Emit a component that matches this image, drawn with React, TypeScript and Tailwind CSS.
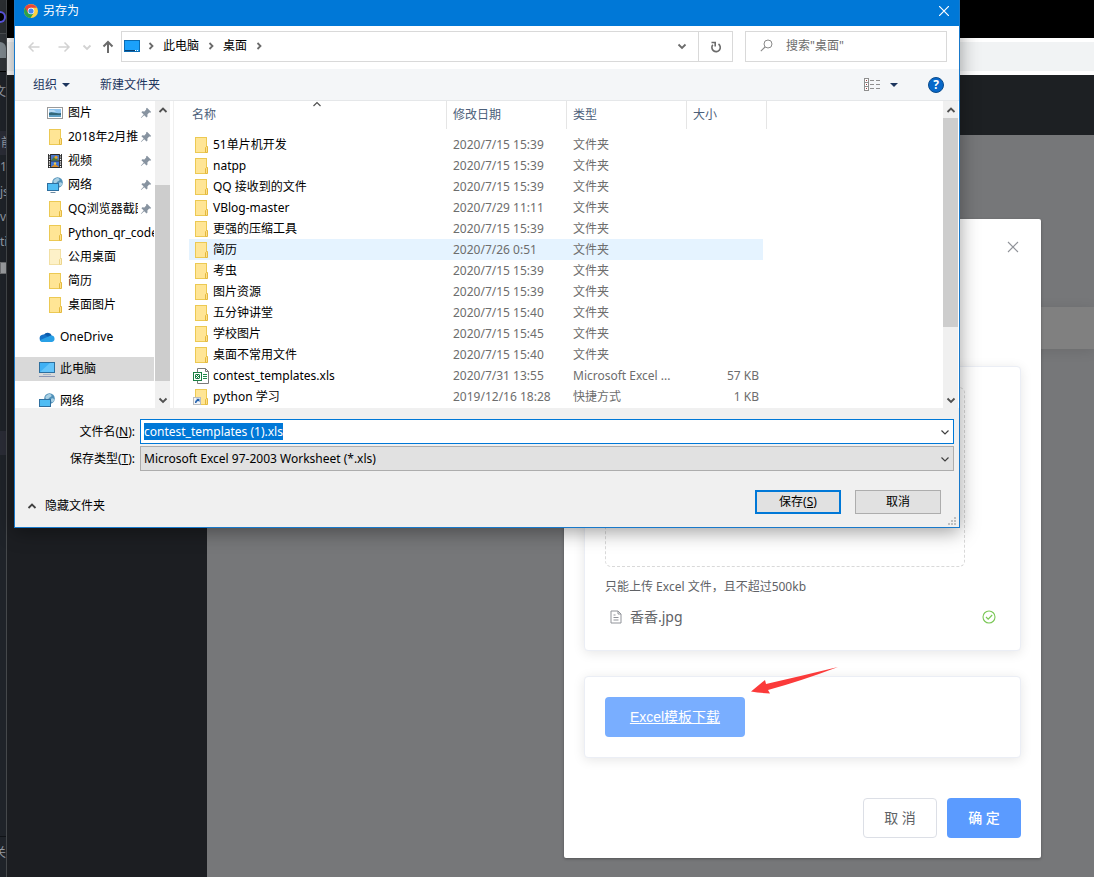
import { useEffect, useRef, type ReactNode } from "react";

type IconProps = { className?: string };

function ChromeIcon() {
  return (
    <svg viewBox="0 0 28 28" className="h-3.5 w-3.5 shrink-0" aria-hidden="true">
      <circle cx="14" cy="14" r="14" fill="#fdd043" />
      <path d="M14 14 1.900 7A14 14 0 0 0 13 28l7-11z" fill="#2ba24c" />
      <path d="M8 17.500 1.900 7A14 14 0 0 1 26.100 7.500H14z" fill="#e8453a" />
      <circle cx="14" cy="14" r="6.600" fill="#fff" />
      <circle cx="14" cy="14" r="5.200" fill="#4285f4" />
    </svg>
  );
}

function Folder({ pale = false, shortcut = false }: { pale?: boolean; shortcut?: boolean }) {
  return (
    <svg viewBox="0 0 16 16" className="h-4 w-4 shrink-0" aria-hidden="true">
      <rect x="2.500" y="0.500" width="11" height="15" fill={pale ? "#fdf1c8" : "#ffe595"} stroke={pale ? "#f2e0a4" : "#ecc953"} />
      <path d="M12.500 15.500v-5l1-1h1v6z" fill={pale ? "#fdf1c8" : "#ffe08a"} stroke={pale ? "#ecd58c" : "#e3b93f"} />
      {shortcut && (
        <>
          <rect x="0.500" y="8.500" width="7" height="7" fill="#f4f6f8" stroke="#b9bcc0" />
          <path d="M2 14c0-2 .600-3 2-3L3.200 9.800H6.500V13L5.400 12C4.200 12 3.600 12.700 3.400 14z" fill="#1f5fae" />
        </>
      )}
    </svg>
  );
}

function ExcelIcon() {
  return (
    <svg viewBox="0 0 16 16" className="h-4 w-4 shrink-0" aria-hidden="true">
      <path d="M4.500.500h8l3 3v12h-11z" fill="#fff" stroke="#7a7a7a" />
      <path d="M12.500.500v3h3" fill="none" stroke="#7a7a7a" />
      <path d="M10 6.500h4M10 8.500h4M10 10.500h4" stroke="#1f8a4c" />
      <rect x="0.500" y="4.500" width="8" height="8" fill="#fff" stroke="#1a7f43" />
      <path d="M2 6h5v5H2z" fill="#1a7f43" />
      <path d="m2.500 6.500 4 4M6.500 6.500l-4 4" stroke="#fff" />
    </svg>
  );
}

function PictureIcon() {
  return (
    <svg viewBox="0 0 16 16" className="h-4 w-4 shrink-0" aria-hidden="true">
      <rect x="0.500" y="2.500" width="15" height="11" fill="#fff" stroke="#9a9a9a" />
      <rect x="2" y="4" width="12" height="8" fill="#8fc4ee" />
      <path d="M2 8c3-2 6 1 12 0v2H2z" fill="#34687a" />
      <rect x="2" y="10" width="12" height="2" fill="#5f9fc4" />
      <path d="M2 5.500h5l2 1H2z" fill="#e8f4fc" />
    </svg>
  );
}

function VideoIcon() {
  return (
    <svg viewBox="0 0 16 16" className="h-4 w-4 shrink-0" aria-hidden="true">
      <rect x="1" y="1" width="14" height="14" fill="#2b2b2b" />
      <path d="M2.500 1v14M13.500 1v14" stroke="#fff" strokeWidth="1.200" strokeDasharray="1.200 1.200" />
      <rect x="4" y="2" width="8" height="5.500" fill="#4c78c9" />
      <rect x="4" y="8.500" width="8" height="5.500" fill="#3f75d6" />
      <path d="M4 7.500 7 4l5 3.500z" fill="#4d7a35" />
      <circle cx="9" cy="4.200" r="1.500" fill="#e5a52b" />
      <path d="m4 14 4-3 4 3z" fill="#d98f2b" />
      <circle cx="8" cy="10.500" r="1.200" fill="#edc94d" />
    </svg>
  );
}

function NetworkIcon() {
  return (
    <svg viewBox="0 0 16 16" className="h-4 w-4 shrink-0" aria-hidden="true">
      <circle cx="10.500" cy="5.500" r="5.300" fill="#4f90b8" />
      <path d="M8 2c2-1.500 4-1 4.500.500S10 4 9.500 6 7 6.500 6.500 5 7 3 8 2zM12.500 5.500c1.500-.500 3 .500 2.500 2s-2 2.500-2.500 1.500-1-2.500 0-3.500z" fill="#a9d0e4" />
      <rect x="0.500" y="6.500" width="11" height="7" fill="#50bdf4" stroke="#2f6f9f" />
      <path d="M3.500 15.500h5" stroke="#6e8ca3" />
    </svg>
  );
}

function CloudIcon() {
  return (
    <svg viewBox="0 0 16 16" className="h-4 w-4 shrink-0" aria-hidden="true">
      <path d="M4.800 6A4.500 4.500 0 0 1 12.800 6.500L9.500 9z" fill="#0a5bab" />
      <path d="M4 13a3.700 3.700 0 0 1-.500-7.300C5 5.300 6.500 5.800 8 7l4 3z" fill="#1372c8" />
      <path d="M12.500 6.500a3.300 3.300 0 0 1 .500 6.500H4c-1.500 0-2.700-.700-3.300-1.800L9.500 7.500c1-.700 2-1 3-1z" fill="#28a0e6" />
    </svg>
  );
}

function MonitorIcon() {
  return (
    <svg viewBox="0 0 16 16" className="h-4 w-4 shrink-0" aria-hidden="true">
      <rect x="0.500" y="1.500" width="15" height="10" fill="#3fb1f5" stroke="#2d6f9e" />
      <path d="M1 11 11 2h4v9z" fill="#63c4fa" />
      <path d="M4 13.500h8" stroke="#a7b6c6" />
      <path d="M0 15.500h16" stroke="#8c97b5" />
    </svg>
  );
}

function DesktopIcon() {
  return (
    <svg viewBox="0 0 16 12" className="h-3 w-4 shrink-0" aria-hidden="true">
      <rect x="0.500" y="0.500" width="15" height="11" fill="#1ba1fb" stroke="#0a6cb4" />
      <path d="M1 10.500h10" stroke="#083f70" />
      <path d="M11 10.500h4" stroke="#fff" strokeDasharray="1 1" />
    </svg>
  );
}

function Pin() {
  return (
    <svg viewBox="0 0 12 12" className="h-3 w-3 shrink-0" aria-hidden="true">
      <path d="M7 .800 11.200 5l-1 .800-1-.200-1.800 1.900.100 2.100-.900.900-2.400-2.300L1.200 11l-.400-.300 2.900-3.200-2.300-2.300.900-.900 2.100.100L6.200 2.600 6.100 1.600z" fill="#8793a0" />
    </svg>
  );
}

function Chevron({ dir, thin = false, className = "" }: { dir: "up" | "down" | "right"; thin?: boolean; className?: string }) {
  const d = dir === "up" ? "M1.500 7 5 3.500 8.500 7" : dir === "down" ? "M1.500 3.500 5 7l3.500-3.500" : "M3.500 2 6.500 5l-3 3";
  return (
    <svg viewBox="0 0 10 10" className={`h-2.5 w-2.5 shrink-0 ${className}`} aria-hidden="true">
      <path d={d} fill="none" stroke="currentColor" strokeWidth={thin ? 1.200 : 1.800} />
    </svg>
  );
}

function Triangle({ className = "" }: IconProps) {
  return (
    <svg viewBox="0 0 8 4" className={`h-1 w-2 shrink-0 ${className}`} aria-hidden="true">
      <path d="M0 0h8L4 4z" fill="#1c355e" />
    </svg>
  );
}

function Arrow({ dir, className }: { dir: "left" | "right" | "up"; className: string }) {
  const d =
    dir === "left" ? "M12.500 7H2M6.500 2.500 2 7l4.500 4.500" : dir === "right" ? "M1.500 7H12M7.500 2.500 12 7l-4.500 4.500" : "M7 13V2M2.500 6.500 7 2l4.500 4.500";
  return (
    <svg viewBox="0 0 14 14" className={`h-3.5 w-3.5 ${className}`} aria-hidden="true">
      <path d={d} fill="none" stroke="currentColor" strokeWidth={dir === "up" ? 2 : 1.500} />
    </svg>
  );
}

type Place = { name: string; icon: ReactNode; pinned?: boolean };

const quickAccess: Place[] = [
  { name: "图片", icon: <PictureIcon />, pinned: true },
  { name: "2018年2月推", icon: <Folder />, pinned: true },
  { name: "视频", icon: <VideoIcon />, pinned: true },
  { name: "网络", icon: <NetworkIcon />, pinned: true },
  { name: "QQ浏览器截图", icon: <Folder />, pinned: true },
  { name: "Python_qr_code", icon: <Folder /> },
  { name: "公用桌面", icon: <Folder pale /> },
  { name: "简历", icon: <Folder /> },
  { name: "桌面图片", icon: <Folder /> },
];

const roots: (Place & { active?: boolean })[] = [
  { name: "OneDrive", icon: <CloudIcon /> },
  { name: "此电脑", icon: <MonitorIcon />, active: true },
  { name: "网络", icon: <NetworkIcon /> },
];

type FileRow = { name: string; date: string; type: string; size?: string; icon?: ReactNode; hover?: boolean };

const files: FileRow[] = [
  { name: "51单片机开发", date: "2020/7/15 15:39", type: "文件夹" },
  { name: "natpp", date: "2020/7/15 15:39", type: "文件夹" },
  { name: "QQ 接收到的文件", date: "2020/7/15 15:39", type: "文件夹" },
  { name: "VBlog-master", date: "2020/7/29 11:11", type: "文件夹" },
  { name: "更强的压缩工具", date: "2020/7/15 15:39", type: "文件夹" },
  { name: "简历", date: "2020/7/26 0:51", type: "文件夹", hover: true },
  { name: "考虫", date: "2020/7/15 15:39", type: "文件夹" },
  { name: "图片资源", date: "2020/7/15 15:39", type: "文件夹" },
  { name: "五分钟讲堂", date: "2020/7/15 15:40", type: "文件夹" },
  { name: "学校图片", date: "2020/7/15 15:45", type: "文件夹" },
  { name: "桌面不常用文件", date: "2020/7/15 15:40", type: "文件夹" },
  { name: "contest_templates.xls", date: "2020/7/31 13:55", type: "Microsoft Excel ...", size: "57 KB", icon: <ExcelIcon /> },
  { name: "python 学习", date: "2019/12/16 18:28", type: "快捷方式", size: "1 KB", icon: <Folder shortcut /> },
];

function EditorStrip() {
  return (
    <div className="flex w-[7px] shrink-0 flex-col overflow-hidden border-r border-[#45484b] bg-[#1f2329] text-xs leading-6 whitespace-nowrap text-[#9299a3]">
      <div className="flex h-[33px] items-center justify-start bg-[#2b2e31]">
        <span className="h-3 w-1.5 shrink-0 rounded-r-full border-2 border-l-0 border-[#5a55e0] bg-black" />
      </div>
      <div className="h-[38px] border-t border-[#4a4d50] bg-[#303438] pt-2">
        <div className="h-4 w-1.5 rounded-tr-md bg-[#7d868c]" />
      </div>
      <div className="h-9 border-t border-black pt-2">
        <div className="flex w-1.5 justify-end">文</div>
      </div>
      <div className="mt-6 h-6 bg-[#2a2c36] pl-px">前</div>
      <div className="h-[25px]">1</div>
      <div className="h-[25px]">js</div>
      <div className="h-[25px]">v</div>
      <div className="h-6">ti</div>
      <div className="mt-2 h-3 border border-r-0 border-[#6d6f72] bg-[#9b9da0]" />
      <div className="mt-[157px] h-6 bg-[#2a2c36]" />
      <div className="mt-auto mb-3 border-t border-[#101317] pt-1">
        <div className="flex w-1.5 justify-end">关</div>
      </div>
    </div>
  );
}

function BrowserPage() {
  return (
    <div className="flex min-w-0 flex-1 flex-col">
      <div className="h-[38px] bg-black" />
      <div className="h-[37px] border-y-4 border-white bg-[#f1f3f4]" />
      <div className="h-[60px] bg-[#1d2023]" />
      <div className="flex flex-1">
        <div className="w-[200px] shrink-0 bg-[#1c1e22]" />
        <div className="flex-1 bg-[#767779] pt-[172px]">
          <div className="h-[42px] bg-[#808080] shadow-[0_2px_12px_rgba(0,0,0,0.1)]" />
        </div>
      </div>
    </div>
  );
}

const cardClass = "rounded-[4px] border border-[#ebeef5] bg-white p-5 shadow-[0_2px_12px_rgba(0,0,0,0.1)]";

function UploadModal() {
  return (
    <section aria-label="上传" className="w-[477px] rounded-[2px] bg-white p-5 text-sm text-[#606266] shadow-[0_1px_3px_rgba(0,0,0,0.3)]">
      <div className="flex h-[127px] items-start justify-end">
        <button type="button" aria-label="关闭" className="p-0.5 text-[#909399]">
          <svg viewBox="0 0 12 12" className="h-3 w-3" aria-hidden="true">
            <path d="m1 1 10 10M11 1 1 11" stroke="currentColor" strokeWidth="1.100" />
          </svg>
        </button>
      </div>
      <div className={`${cardClass} h-[285px]`}>
        <div className="h-[180px] max-w-[360px] rounded-[6px] border border-dashed border-[#d9d9d9]" />
        <p className="mt-3 text-xs leading-4">只能上传 Excel 文件，且不超过500kb</p>
        <div className="mt-2 flex h-7 items-center px-1">
          <svg viewBox="0 0 14 14" className="h-3.5 w-3.5 text-[#909399]" aria-hidden="true">
            <path d="M2 1h7l3 3v9H2zM9 1v3h3M4.500 5h2M4.500 7.500h5M4.500 10h5" fill="none" stroke="currentColor" />
          </svg>
          <span className="ml-[7px] flex-1">香香.jpg</span>
          <svg viewBox="0 0 14 14" className="h-3.5 w-3.5 text-[#7ac756]" aria-hidden="true">
            <circle cx="7" cy="7" r="6" fill="none" stroke="currentColor" strokeWidth="1.100" />
            <path d="m4 7 2.200 2.200L10.200 5" fill="none" stroke="currentColor" strokeWidth="1.200" />
          </svg>
        </div>
      </div>
      <div className={`${cardClass} relative mt-[25px]`}>
        <a href="#template" className="inline-flex h-10 w-[140px] items-center justify-center rounded-[4px] bg-[#79aeff] font-['Liberation_Sans','Noto_Sans_CJK_SC',sans-serif] text-white underline">
          Excel模板下载
        </a>
        <svg viewBox="0 0 88 28" className="absolute -top-2.5 left-[166px] h-7 w-[88px]" aria-hidden="true">
          <path d="M0 24.500 14 13l1 4Q50 9 87 0 50 14 17 23l2 3.500Q9 26 0 24.500z" fill="#fb3a3a" />
        </svg>
      </div>
      <div className="mt-10 flex justify-end gap-2.5">
        <button type="button" className="h-10 w-[74px] rounded-[4px] border border-[#dcdfe6] bg-white">取 消</button>
        <button type="button" className="h-10 w-[74px] rounded-[4px] bg-[#5b9bff] font-medium text-white">确 定</button>
      </div>
    </section>
  );
}

function ScrollBar({ thumb }: { thumb: ReactNode }) {
  return (
    <div className="flex w-[15px] shrink-0 flex-col items-center bg-[#f0f0f0] text-[#505050]">
      <div className="flex h-[17px] items-center"><Chevron dir="up" /></div>
      <div className="flex min-h-0 w-full flex-1 flex-col">{thumb}</div>
      <div className="flex h-[17px] items-center"><Chevron dir="down" /></div>
    </div>
  );
}

function NavRow() {
  return (
    <div className="flex h-[43px] items-center bg-white px-3 pb-0.5">
      <button type="button" aria-label="后退"><Arrow dir="left" className="text-[#d2d2d2]" /></button>
      <button type="button" aria-label="前进" className="ml-4"><Arrow dir="right" className="text-[#d2d2d2]" /></button>
      <button type="button" aria-label="最近位置" className="ml-[11px]"><Chevron dir="down" className="text-[#d2d2d2]" /></button>
      <button type="button" aria-label="上移" className="ml-[9px]"><Arrow dir="up" className="text-[#6b6b6b]" /></button>
      <div className="ml-1.5 flex h-[31px] min-w-0 flex-1 border border-[#d9d9d9]">
        <div className="flex min-w-0 flex-1 items-center gap-2 pb-0.5 pl-0.5">
          <DesktopIcon />
          <div className="flex items-center gap-[9px]">
            <Chevron dir="right" className="-mx-0.5 text-[#6b6b6b]" />
            <span>此电脑</span>
            <Chevron dir="right" className="-mx-0.5 text-[#6b6b6b]" />
            <span>桌面</span>
            <Chevron dir="right" className="-mx-0.5 text-[#6b6b6b]" />
          </div>
          <button type="button" aria-label="以前的位置" className="mr-[11px] ml-auto flex"><Chevron dir="down" className="text-[#6b6b6b]" /></button>
        </div>
        <button type="button" aria-label="刷新" className="flex w-[34px] items-center justify-center border-l border-[#d9d9d9]">
          <svg viewBox="0 0 12 12" className="h-3 w-3" aria-hidden="true">
            <path d="M8.500 3A4.200 4.200 0 1 1 2.800 3.800M1.500 1.500H5.200V5.500" fill="none" stroke="#6b6b6b" strokeWidth="1.600" />
          </svg>
        </button>
      </div>
      <label className="ml-3 flex h-[31px] w-[202px] items-center border border-[#d9d9d9] pb-0.5 pl-3.5">
        <svg viewBox="0 0 13 13" className="h-[13px] w-[13px] shrink-0" aria-hidden="true">
          <circle cx="8" cy="5" r="4" fill="none" stroke="#8a8a8a" />
          <path d="M5 8 .800 12.200" stroke="#8a8a8a" strokeWidth="1.100" />
        </svg>
        <input aria-label="搜索" placeholder={'搜索"桌面"'} className="ml-[13px] w-full min-w-0 outline-none placeholder:text-[#6d6d6d] placeholder:opacity-100" />
      </label>
    </div>
  );
}

function ToolRow() {
  return (
    <div className="flex h-8 items-center border-b border-[#e5e7e9] bg-[#f4f6f8] pr-[15px] pl-[18px] text-[#1c355e]">
      <button type="button" className="flex items-center gap-[5px]">组织 <Triangle /></button>
      <button type="button" className="ml-[30px]">新建文件夹</button>
      <button type="button" aria-label="更改视图" className="ml-auto flex items-center gap-2.5">
        <svg viewBox="0 0 16 13" className="h-[13px] w-4" aria-hidden="true">
          <rect x="0.500" y="0.500" width="4" height="12" fill="#fff" stroke="#8f8f8f" />
          <path d="M0 4.500h5M0 8.500h5" stroke="#8f8f8f" />
          <path d="M6 2.500h4M12 2.500h4M6 6.500h4M12 6.500h4M6 10.500h4M12 10.500h4" stroke="#8f8f8f" />
          <path d="M2 2.500h1M2 6.500h1M2 10.500h1" stroke="#a13c3c" />
        </svg>
        <Triangle />
      </button>
      <button type="button" aria-label="帮助" className="ml-[30px] flex h-4 w-4 items-center justify-center rounded-full border border-[#0b4c8c] bg-[#0868c9] text-xs leading-3 font-bold text-white">
        ?
      </button>
    </div>
  );
}

function SideTree() {
  return (
    <nav aria-label="位置" className="mr-px w-[139px] shrink-0 overflow-hidden whitespace-nowrap">
      <ul>
        {quickAccess.map((p) => (
          <li key={p.name}>
            <a href="#place" className="flex h-6 items-center pl-8">
              {p.icon}
              <span className="ml-[5px] min-w-0 flex-1 overflow-hidden">{p.name}</span>
              {p.pinned && <span className="mr-0.5 ml-0.5"><Pin /></span>}
            </a>
          </li>
        ))}
        {roots.map((p) => (
          <li key={p.name} className="mt-2">
            <a href="#place" className={`flex h-6 items-center pl-6 ${p.active ? "bg-[#d9d9d9]" : ""}`}>
              {p.icon}
              <span className="ml-[5px]">{p.name}</span>
            </a>
          </li>
        ))}
      </ul>
    </nav>
  );
}

function FileTable() {
  return (
    <div className="relative min-w-0 flex-1 overflow-hidden pl-[15px]">
      <table className="w-[578px] table-fixed border-separate border-spacing-0 text-left whitespace-nowrap">
        <colgroup>
          <col className="w-[258px]" />
          <col className="w-[120px]" />
          <col className="w-[120px]" />
          <col className="w-[76px]" />
          <col className="w-1" />
        </colgroup>
        <thead>
          <tr className="h-7 text-[#4c607a]">
            <th className="relative border-r border-[#e5e5e5] p-0 pl-[3px] font-normal">
              名称
              <Chevron dir="up" thin className="absolute -top-0.5 left-[123px] text-[#505050]" />
            </th>
            <th className="border-r border-[#e5e5e5] p-0 pl-1.5 font-normal">修改日期</th>
            <th className="border-r border-[#e5e5e5] p-0 pl-1.5 font-normal">类型</th>
            <th colSpan={2} className="border-r border-[#e5e5e5] p-0 pl-1.5 font-normal">大小</th>
          </tr>
        </thead>
        <tbody>
          <tr aria-hidden="true" className="h-[5px]"><td className="p-0" /></tr>
          {files.map((f) => {
            const cell = f.hover ? "bg-[#e5f3ff] p-0" : "p-0";
            return (
              <tr key={f.name} className="h-[21px] text-[#6d6d6d]">
                <td className={cell}>
                  <div className="flex items-center gap-1 pl-1 text-black">
                    {f.icon ?? <Folder />}
                    <span>{f.name}</span>
                  </div>
                </td>
                <td className={`${cell} pl-1.5`}>{f.date}</td>
                <td className={`${cell} pl-1.5`}>{f.type}</td>
                <td className={`${cell} pr-1 text-right`}>{f.size}</td>
              </tr>
            );
          })}
        </tbody>
      </table>
    </div>
  );
}

function SaveDialog() {
  const nameRef = useRef<HTMLInputElement>(null);
  useEffect(() => {
    nameRef.current?.focus();
    nameRef.current?.select();
  }, []);

  return (
    <section aria-label="另存为" className="w-full border border-t-0 border-[#1979ca] bg-[#f0f0f0] text-xs leading-4 text-black shadow-[0_4px_18px_rgba(0,0,0,0.38)]">
      <header className="flex h-[26px] items-center bg-[#0078d7] pr-2.5 pb-[5px] pl-[9px] text-white">
        <ChromeIcon />
        <h1 className="ml-[5px]">另存为</h1>
        <button type="button" aria-label="关闭" className="ml-auto">
          <svg viewBox="0 0 10 10" className="h-2.5 w-2.5" aria-hidden="true">
            <path d="m0 0 10 10M10 0 0 10" stroke="#fff" strokeWidth="1.200" />
          </svg>
        </button>
      </header>
      <NavRow />
      <ToolRow />
      <div className="flex h-[307px] bg-white pr-px">
        <SideTree />
        <ScrollBar thumb={<><div className="h-[67px]" /><div className="flex-1 bg-[#cdcdcd]" /><div className="h-2.5" /></>} />
        <div className="w-1 border-r border-[#f0f0f0]" />
        <FileTable />
        <ScrollBar thumb={<div className="h-[209px] bg-[#cdcdcd]" />} />
      </div>
      <form className="relative pt-[11px] pb-[13px]" onSubmit={(e) => e.preventDefault()}>
        <div className="grid grid-cols-[120px_1fr] gap-x-[5px] gap-y-0.5 pr-[5px]">
          <label htmlFor="file-name" className="self-center text-right">文件名(<u>N</u>):</label>
          <div className="relative">
            <input id="file-name" ref={nameRef} defaultValue="contest_templates (1).xls" className="block h-[25px] w-full border border-[#0078d7] bg-white px-[3px] pb-px outline-none selection:bg-[#0078d7] selection:text-white" />
            <Chevron dir="down" thin className="absolute top-2 right-1 text-[#404040]" />
          </div>
          <label htmlFor="file-type" className="self-center text-right">保存类型(<u>T</u>):</label>
          <div className="relative">
            <select id="file-type" className="block h-[25px] w-full appearance-none border border-[#adadad] bg-[#e1e1e1] px-[3px] outline-none">
              <option>Microsoft Excel 97-2003 Worksheet (*.xls)</option>
            </select>
            <Chevron dir="down" thin className="pointer-events-none absolute top-2 right-1 text-[#404040]" />
          </div>
        </div>
        <div className="mt-[19px] flex pr-[18px] pl-3">
          <button type="button" className="mr-auto flex items-center gap-2 self-end">
            <Chevron dir="up" className="text-[#404040]" />
            隐藏文件夹
          </button>
          <button type="submit" className="h-6 w-[86px] border-2 border-[#0078d7] bg-[#e1e1e1]">保存(<u>S</u>)</button>
          <button type="button" className="ml-3.5 h-6 w-[86px] border border-[#adadad] bg-[#e1e1e1]">取消</button>
        </div>
        <svg viewBox="0 0 8 8" className="absolute right-[3px] bottom-0.5 h-2 w-2" aria-hidden="true">
          <path d="M6 0h2v2H6zM3 3h2v2H3zM6 3h2v2H6zM0 6h2v2H0zM3 6h2v2H3zM6 6h2v2H6z" fill="#bfbfbf" />
        </svg>
      </form>
    </section>
  );
}

export default function App() {
  return (
    <div className="relative flex min-h-screen overflow-hidden font-['Noto_Sans','Noto_Sans_CJK_SC',sans-serif]">
      <EditorStrip />
      <BrowserPage />
      <div className="absolute inset-0 flex items-start justify-end pt-[219px] pr-[53px]">
        <UploadModal />
      </div>
      <div className="absolute inset-x-0 top-0 pr-[134px] pl-3.5">
        <SaveDialog />
      </div>
    </div>
  );
}
